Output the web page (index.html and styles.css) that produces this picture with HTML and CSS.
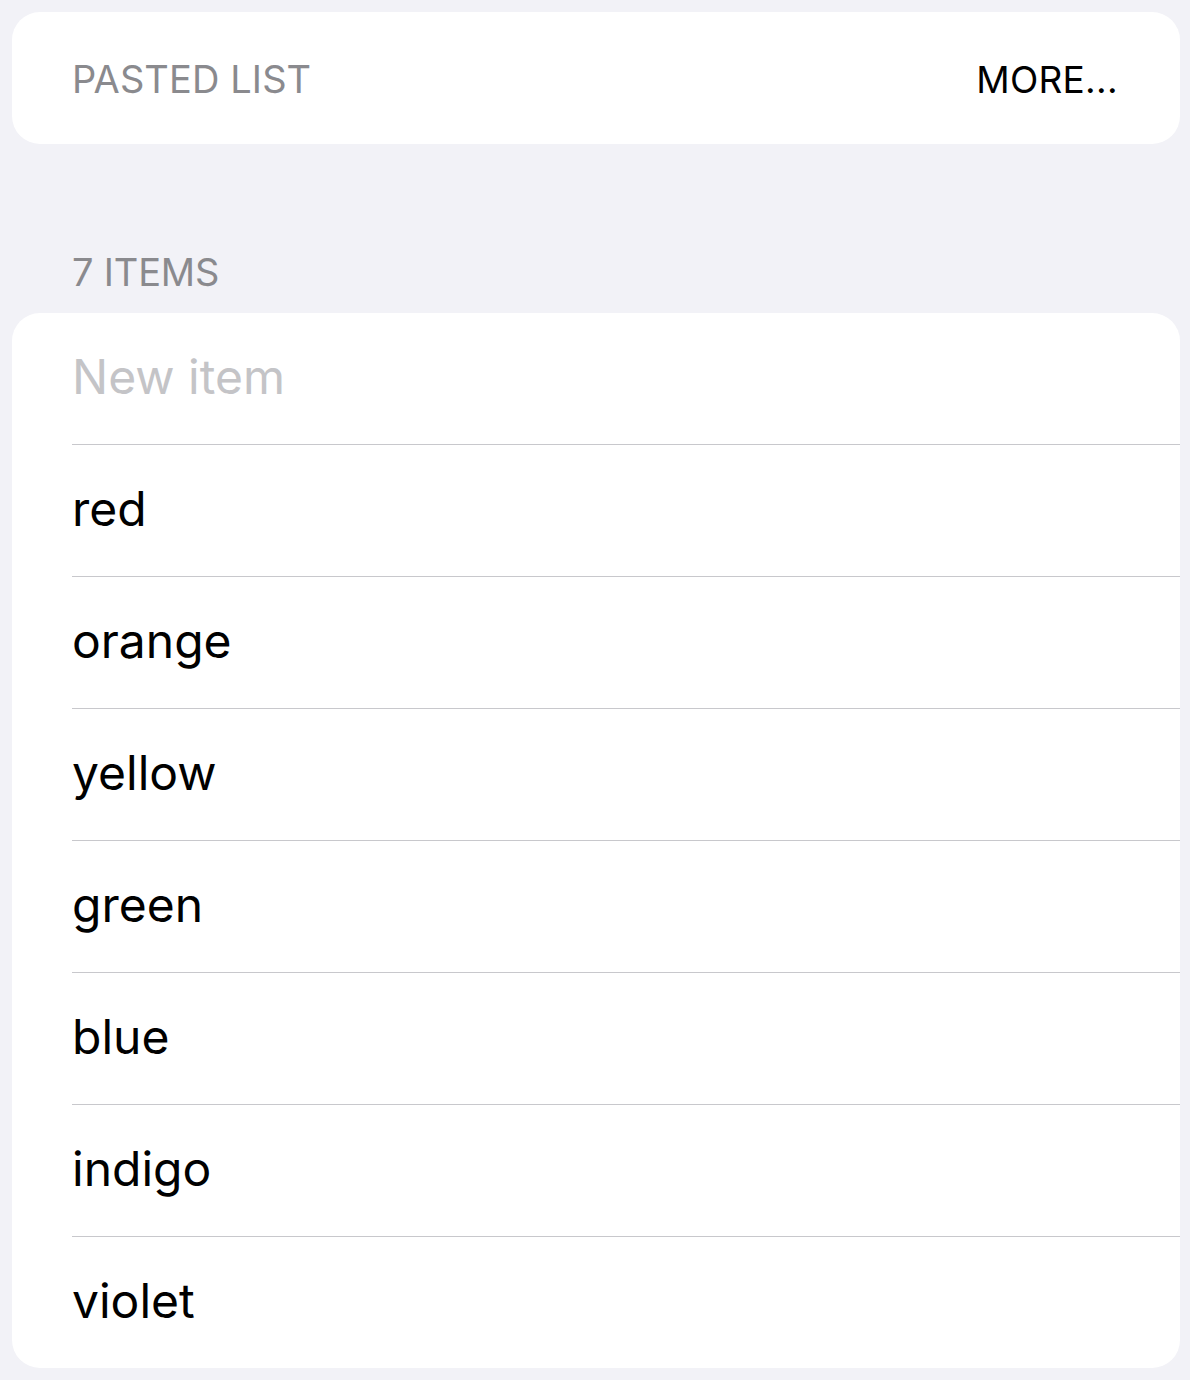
FILE: index.html
```html
<!DOCTYPE html>
<html lang="en">
<head>
<meta charset="utf-8">
<title>Pasted List</title>
<link rel="stylesheet" href="styles.css">
</head>
<body>
<main class="screen">
  <section class="card title-card">
    <span class="title">PASTED LIST</span>
    <span class="more">MORE...</span>
  </section>
  <h2 class="section-header">7 ITEMS</h2>
  <ul class="card list">
    <li class="row placeholder">New item</li>
    <li class="row">red</li>
    <li class="row">orange</li>
    <li class="row">yellow</li>
    <li class="row">green</li>
    <li class="row">blue</li>
    <li class="row">indigo</li>
    <li class="row">violet</li>
  </ul>
</main>
</body>
</html>
```

FILE: styles.css
```css
* { box-sizing: border-box; }
html, body {
  margin: 0;
  padding: 0;
  background: #f2f2f7;
  font-family: Inter, "Noto Sans", "Liberation Sans", sans-serif;
  -webkit-font-smoothing: antialiased;
}
.screen {
  padding: 12px 10px 12px 12px;
  display: flex;
  flex-direction: column;
}
.card {
  background: #ffffff;
  border-radius: 28px;
}
.title-card {
  height: 132px;
  display: flex;
  align-items: center;
  justify-content: space-between;
  padding: 2px 62px 0 60px;
}
.title {
  font-size: 38px;
  color: #8a8a8e;
  letter-spacing: 0.1px;
}
.more {
  font-size: 37px;
  color: #000;
  font-weight: 400;
  letter-spacing: 0.3px;
}
.section-header {
  margin: 0;
  padding: 103px 0 16px 60px;
  font-size: 38px;
  line-height: 50px;
  font-weight: 400;
  color: #8a8a8e;
  letter-spacing: -0.2px;
}
.list {
  list-style: none;
  margin: 0;
  padding: 0 0 0 60px;
}
.row {
  height: 132px;
  display: flex;
  align-items: center;
  padding-bottom: 5px;
  font-size: 48px;
  color: #000;
  border-bottom: 1px solid #c8c8cc;
}
.row:last-child {
  border-bottom: none;
  height: 131px;
}
.placeholder {
  color: #c4c4c7;
}
```
